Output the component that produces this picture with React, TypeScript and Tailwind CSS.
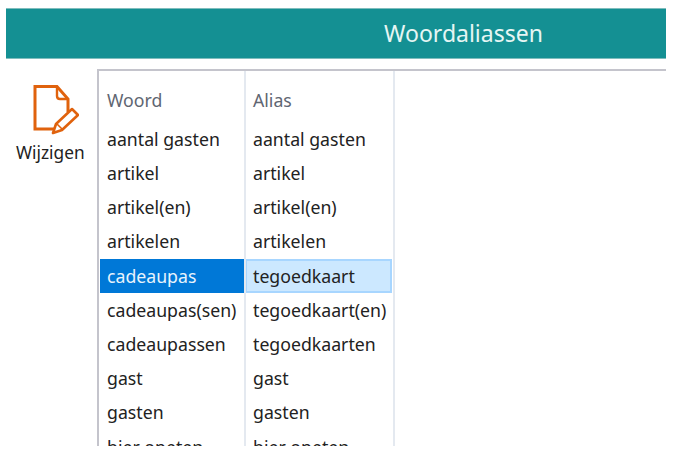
const rows = [
  ["aantal gasten", "aantal gasten"],
  ["artikel", "artikel"],
  ["artikel(en)", "artikel(en)"],
  ["artikelen", "artikelen"],
  ["cadeaupas", "tegoedkaart"],
  ["cadeaupas(sen)", "tegoedkaart(en)"],
  ["cadeaupassen", "tegoedkaarten"],
  ["gast", "gast"],
  ["gasten", "gasten"],
  ["hier opeten", "hier opeten"],
];

function EditIcon() {
  return (
    <svg width="46" height="50" viewBox="0 0 46 50" fill="none" className="text-[#e0620d]">
      <path d="M21 44H2V1.5H24L35 14V27" stroke="currentColor" strokeWidth="3" />
      <path d="M24 2V11C24 13 25 14 27 14H35" stroke="currentColor" strokeWidth="2.4" />
      <path d="M20 48L23 39L39 24L45 30L29 45Z" stroke="currentColor" strokeWidth="2.6" strokeLinejoin="round" />
      <path d="M24 39L30 45" stroke="currentColor" strokeWidth="1.6" />
    </svg>
  );
}

export default function App() {
  return (
    <div className="h-[456px] w-[683px] overflow-hidden bg-white pt-2 pl-[6px] pr-[17px] font-['Noto_Sans',sans-serif] text-[17.7px] text-[#222]">
      <div className="flex h-[51px] items-center justify-center border-y border-[#7fbdbd] bg-[#149093] pl-[255px] text-[23px] text-[#e6f6f4]">
        Woordaliassen
      </div>
      <div className="mt-[10px] flex">
        <div className="flex w-[91px] flex-col items-start pt-[16px]">
          <div className="ml-[27px]">
            <EditIcon />
          </div>
          <span className="mt-[8px] ml-[10px] text-[17.3px] leading-5">Wijzigen</span>
        </div>
        <div className="h-[377px] flex-1 overflow-hidden border-t-2 border-l-2 border-[#c4c4cc] pl-px">
          <div className="flex h-[51px] items-center pt-[7px] text-[#5f6672]">
            <div className="w-[145px] pl-[7px]">Woord</div>
            <div className="pl-[8px]">Alias</div>
          </div>
          <div className="relative">
            {rows.map(([word, alias], i) => {
              const selected = i === 4;
              return (
                <div key={word} className="flex h-[34.2px] items-center">
                  <div className={`flex h-full w-[145px] items-center pl-[7px] ${selected ? "bg-[#0078d7] text-[#e8f3fc]" : ""}`}>
                    {word}
                  </div>
                  <div className={`flex h-full w-[147px] items-center ${selected ? "border-2 border-[#a8d6ff] bg-[#cce8ff] pl-[6px]" : "pl-[8px]"}`}>
                    {alias}
                  </div>
                </div>
              );
            })}
            <div className="absolute top-[-51px] bottom-0 left-[144px] w-[2px] bg-[#e4e9f0]" />
            <div className="absolute top-[-51px] bottom-0 left-[293px] w-[2px] bg-[#e4e9f0]" />
          </div>
        </div>
      </div>
    </div>
  );
}
